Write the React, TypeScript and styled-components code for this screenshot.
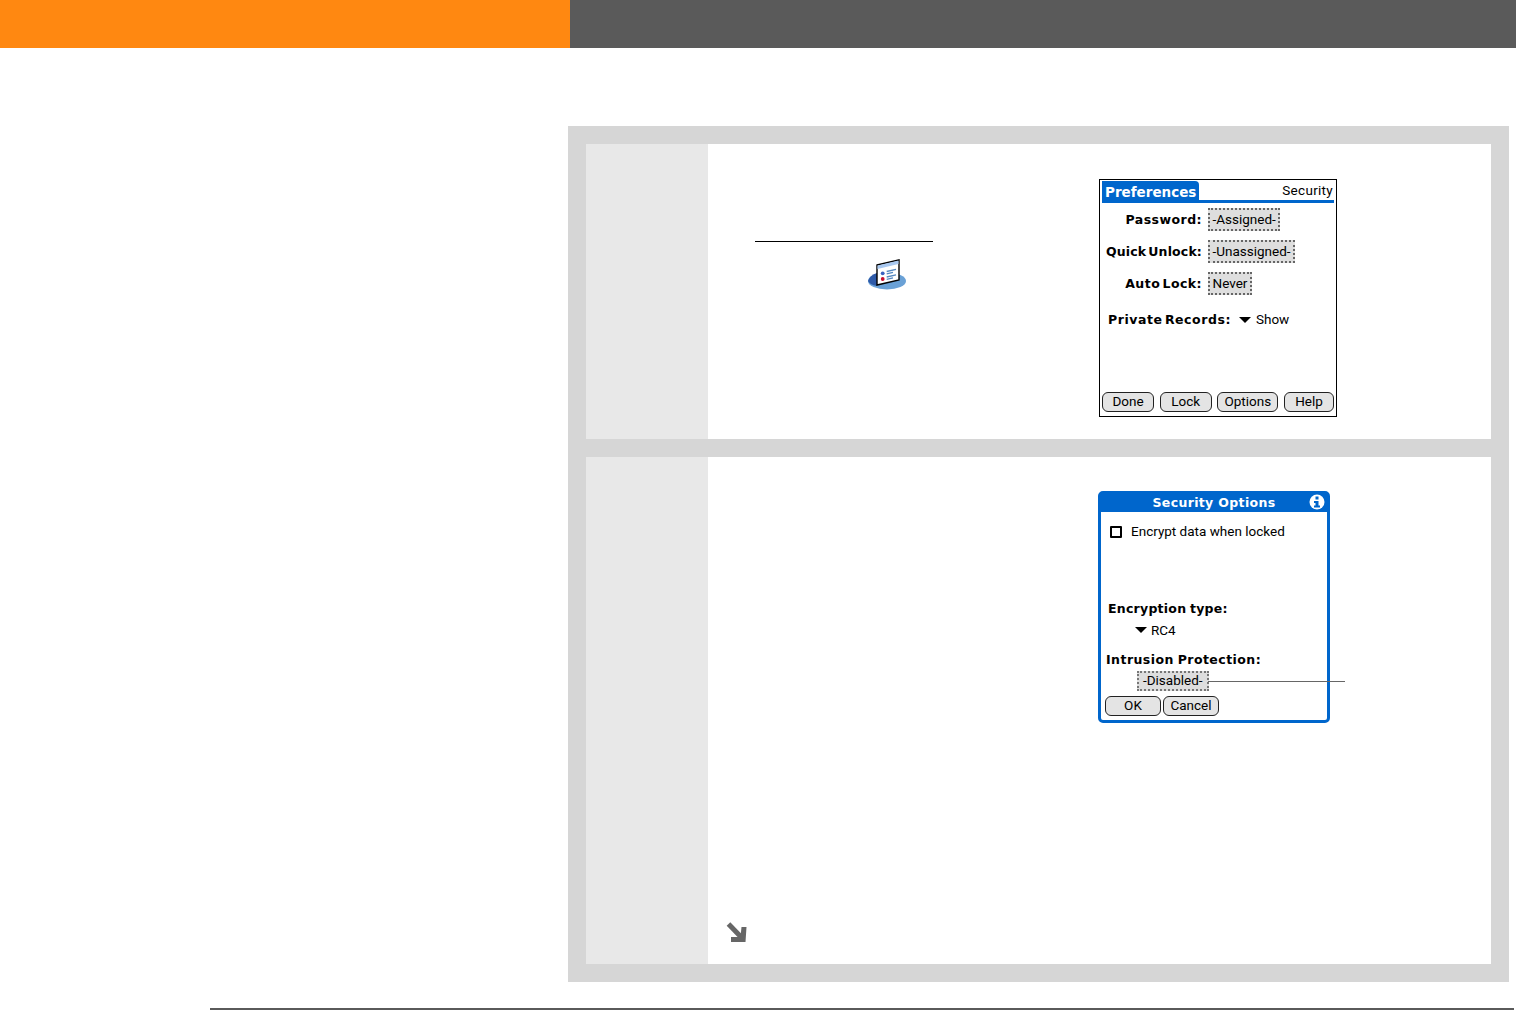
import React from 'react';
import styled, { createGlobalStyle } from 'styled-components';

const palmBlue = '#0066cc';
const palmFont = `Roboto, 'Noto Sans', sans-serif`;
const palmBold = `'DejaVu Sans', 'Noto Sans', sans-serif`;

const GlobalStyle = createGlobalStyle`
  html, body {
    margin: 0;
    padding: 0;
    background: #fff;
    font-family: 'Liberation Sans', Arial, sans-serif;
  }
  * {
    box-sizing: border-box;
  }
`;

const Page = styled.div`
  width: 1516px;
  height: 1010px;
  overflow: hidden;
  display: flex;
  flex-direction: column;
`;

const TopBar = styled.header`
  display: flex;
  height: 48px;
  flex-shrink: 0;
`;

const TopBarAccent = styled.div`
  width: 570px;
  background: #ff8811;
`;

const TopBarFill = styled.div`
  flex: 1;
  background: #5a5a5a;
`;

const StepsPanel = styled.main`
  display: flex;
  flex-direction: column;
  gap: 18px;
  width: 941px;
  height: 856px;
  margin: 78px 0 0 568px;
  padding: 18px;
  background: #d6d6d6;
`;

const StepCard = styled.section<{ $height: number }>`
  display: flex;
  height: ${p => p.$height}px;
  background: #fff;
`;

const StepGutter = styled.div`
  width: 122px;
  flex-shrink: 0;
  background: #e8e8e8;
`;

const StepBody = styled.div`
  flex: 1;
  display: flex;
  flex-direction: column;
  min-width: 0;
`;

const StepColumns = styled.div<{ $top: number }>`
  display: flex;
  padding-top: ${p => p.$top}px;
`;

const CopyColumn = styled.div<{ $width: number }>`
  width: ${p => p.$width}px;
  flex-shrink: 0;
  padding-left: 47px;
`;

const LinkRule = styled.div`
  width: 178px;
  height: 1px;
  margin-top: 62px;
  background: #000;
`;

const AppIcon = styled.svg`
  display: block;
  width: 40px;
  height: 32px;
  margin: 17px 0 0 112px;
`;

const ContinueArrow = styled.svg`
  display: block;
  width: 24px;
  height: 24px;
  margin: auto 0 18px 17px;
`;

const PrefsScreen = styled.div`
  width: 238px;
  height: 238px;
  display: flex;
  flex-direction: column;
  padding: 1px 2px 3px 2px;
  border: 1px solid #000;
  background: #fff;
  color: #000;
  font-family: ${palmFont};
  font-size: 13.5px;
  line-height: 19px;
`;

const PrefsHeader = styled.div`
  display: flex;
  justify-content: space-between;
  height: 22px;
  border-bottom: 3px solid ${palmBlue};
`;

const PrefsTab = styled.div`
  width: 97px;
  height: 20px;
  padding-left: 3px;
  border-top-right-radius: 4px;
  background: ${palmBlue};
  color: #fff;
  font-family: ${palmBold};
  font-size: 13.5px;
  font-weight: 700;
  line-height: 22px;
`;

const PrefsTitle = styled.div`
  padding-right: 1px;
  letter-spacing: 0.3px;
  line-height: 18px;
`;

const PrefsForm = styled.div`
  display: grid;
  grid-template-columns: 98px auto;
  justify-content: start;
  justify-items: start;
  align-items: center;
  column-gap: 6px;
  row-gap: 9px;
  margin: 5px 0 0 2px;
`;

const FieldLabel = styled.div<{ $align?: string; $spacing?: number }>`
  justify-self: ${p => p.$align || 'end'};
  font-family: ${palmBold};
  font-size: 12.5px;
  font-weight: 700;
  letter-spacing: ${p => p.$spacing ?? 0.45}px;
  word-spacing: -2.5px;
  white-space: nowrap;
`;

const Chip = styled.div`
  height: 23px;
  padding: 0 2.5px;
  border: 2px dotted #666;
  background: #dedede;
  line-height: 18px;
  white-space: nowrap;
`;

const PickerRow = styled.div`
  display: flex;
  align-items: center;
  gap: 5px;
  margin: 15px 0 0 6px;
`;

const PickerArrow = styled.span<{ $offset: number }>`
  width: 0;
  height: 0;
  margin-left: ${p => p.$offset}px;
  border-left: 6px solid transparent;
  border-right: 6px solid transparent;
  border-top: 6px solid #000;
`;

const PrefsButtons = styled.div`
  display: flex;
  justify-content: space-between;
  margin-top: auto;
  margin-bottom: 1px;
`;

const PalmButton = styled.div<{ $width: number }>`
  width: ${p => p.$width}px;
  height: 20px;
  border: 1px solid #222;
  border-radius: 6px;
  background: #e4e4e4;
  text-align: center;
  line-height: 17px;
`;

const OptionsDialog = styled.div`
  width: 232px;
  height: 232px;
  display: flex;
  flex-direction: column;
  border: 3px solid ${palmBlue};
  border-radius: 5px;
  background: #fff;
  color: #000;
  font-family: ${palmFont};
  font-size: 13.5px;
  line-height: 19px;
`;

const DialogTitle = styled.div`
  position: relative;
  flex-shrink: 0;
  height: 19px;
  margin: -1px -1px 0;
  background: ${palmBlue};
  color: #fff;
  text-align: center;
  font-family: ${palmBold};
  font-size: 12.5px;
  font-weight: 700;
  letter-spacing: 0.35px;
  line-height: 20px;
`;

const InfoBadge = styled.svg`
  position: absolute;
  top: 1px;
  right: 3px;
  width: 16px;
  height: 16px;
`;

const DialogContent = styled.div`
  position: relative;
  flex: 1;
  display: flex;
  flex-direction: column;
  padding: 0 0 4px 4px;
`;

const CheckRow = styled.div`
  display: flex;
  align-items: center;
  gap: 9px;
  margin: 10px 0 0 5px;
`;

const CheckBox = styled.span`
  width: 12px;
  height: 12px;
  border: 2px solid #000;
  border-radius: 1px;
`;

const DialogHeading = styled.div<{ $top: number; $left: number; $spacing: number }>`
  margin: ${p => p.$top}px 0 0 ${p => p.$left}px;
  font-family: ${palmBold};
  font-size: 12.5px;
  font-weight: 700;
  letter-spacing: ${p => p.$spacing}px;
  word-spacing: -1px;
  line-height: 16px;
  white-space: nowrap;
`;

const DialogPicker = styled.div`
  display: flex;
  align-items: center;
  gap: 4px;
  margin: 4px 0 0 29px;
  line-height: 18px;
`;

const DisabledChip = styled.div`
  align-self: flex-start;
  height: 20px;
  margin: 3px 0 0 32px;
  padding: 0 4px;
  border: 2px dotted #777;
  background: #dedede;
  line-height: 15px;
  white-space: nowrap;
`;

const CalloutLine = styled.span`
  position: absolute;
  top: 169px;
  left: 107px;
  width: 137px;
  height: 1px;
  background: #666;
`;

const DialogButtons = styled.div`
  display: flex;
  gap: 2px;
  margin-top: auto;
`;

const FooterRule = styled.footer`
  width: 1304px;
  height: 2px;
  margin: 26px 0 0 210px;
  flex-shrink: 0;
  background: #5a5a5a;
`;

const App = () => {
  return (
    <Page>
      <GlobalStyle />
      <TopBar>
        <TopBarAccent />
        <TopBarFill />
      </TopBar>
      <StepsPanel>
        <StepCard $height={295}>
          <StepGutter />
          <StepBody>
            <StepColumns $top={35}>
              <CopyColumn $width={391}>
                <LinkRule />
                <AppIcon viewBox="0 0 40 32">
                  <ellipse cx="20" cy="22" rx="19" ry="8.5" fill="#6aa1d6" />
                  <path d="M1 22 Q3 16 10 14 L10 27 Q3 26 1 22 Z" fill="#2e5aa8" />
                  <path d="M10 6 L32 1 L32 21 L10 26 Z" fill="#fff" stroke="#000" strokeWidth="1.4" />
                  <path d="M10.5 6.5 L31.5 1.6 L31.5 5 L10.5 10 Z" fill="#a8c8f0" />
                  <circle cx="15.7" cy="14.3" r="1.9" fill="#3a62c0" />
                  <circle cx="15.7" cy="20" r="1.9" fill="#c8102e" />
                  <path d="M19.7 12.5 L29 10.4 M19.7 14.8 L26 13.4 M19.7 18 L29 15.9 M19.7 20.3 L26 18.9" stroke="#5588c0" strokeWidth="1.3" />
                </AppIcon>
              </CopyColumn>
              <PrefsScreen>
                <PrefsHeader>
                  <PrefsTab>Preferences</PrefsTab>
                  <PrefsTitle>Security</PrefsTitle>
                </PrefsHeader>
                <PrefsForm>
                  <FieldLabel>Password:</FieldLabel>
                  <Chip>-Assigned-</Chip>
                  <FieldLabel $spacing={0.15}>Quick Unlock:</FieldLabel>
                  <Chip>-Unassigned-</Chip>
                  <FieldLabel>Auto Lock:</FieldLabel>
                  <Chip>Never</Chip>
                </PrefsForm>
                <PickerRow>
                  <FieldLabel $align="start" $spacing={0.55}>Private Records:</FieldLabel>
                  <PickerArrow $offset={3} />
                  <span>Show</span>
                </PickerRow>
                <PrefsButtons>
                  <PalmButton $width={52}>Done</PalmButton>
                  <PalmButton $width={52}>Lock</PalmButton>
                  <PalmButton $width={61}>Options</PalmButton>
                  <PalmButton $width={50}>Help</PalmButton>
                </PrefsButtons>
              </PrefsScreen>
            </StepColumns>
          </StepBody>
        </StepCard>
        <StepCard $height={507}>
          <StepGutter />
          <StepBody>
            <StepColumns $top={34}>
              <CopyColumn $width={390} />
              <OptionsDialog>
                <DialogTitle>
                  Security Options
                  <InfoBadge viewBox="0 0 16 16">
                    <circle cx="8" cy="8" r="7.5" fill="#fff" />
                    <rect x="6.5" y="2.5" width="3" height="3" fill={palmBlue} />
                    <path d="M5 7 H9.5 V11.5 H11 V13.5 H5 V11.5 H6.5 V9 H5 Z" fill={palmBlue} />
                  </InfoBadge>
                </DialogTitle>
                <DialogContent>
                  <CheckRow>
                    <CheckBox />
                    <span>Encrypt data when locked</span>
                  </CheckRow>
                  <DialogHeading $top={60} $left={3} $spacing={0.25}>Encryption type:</DialogHeading>
                  <DialogPicker>
                    <PickerArrow $offset={1} />
                    <span>RC4</span>
                  </DialogPicker>
                  <DialogHeading $top={13} $left={1} $spacing={0.45}>Intrusion Protection:</DialogHeading>
                  <DisabledChip>-Disabled-</DisabledChip>
                  <CalloutLine />
                  <DialogButtons>
                    <PalmButton $width={56}>OK</PalmButton>
                    <PalmButton $width={56}>Cancel</PalmButton>
                  </DialogButtons>
                </DialogContent>
              </OptionsDialog>
            </StepColumns>
            <ContinueArrow viewBox="0 0 24 24">
              <path d="M3.5 2 L17 16" stroke="#666" strokeWidth="5" fill="none" />
              <path d="M21.5 5 L20.5 20 L6 20 L6 15 L15.5 15 L16.5 5 Z" fill="#666" />
            </ContinueArrow>
          </StepBody>
        </StepCard>
      </StepsPanel>
      <FooterRule />
    </Page>
  );
};

export default App;
